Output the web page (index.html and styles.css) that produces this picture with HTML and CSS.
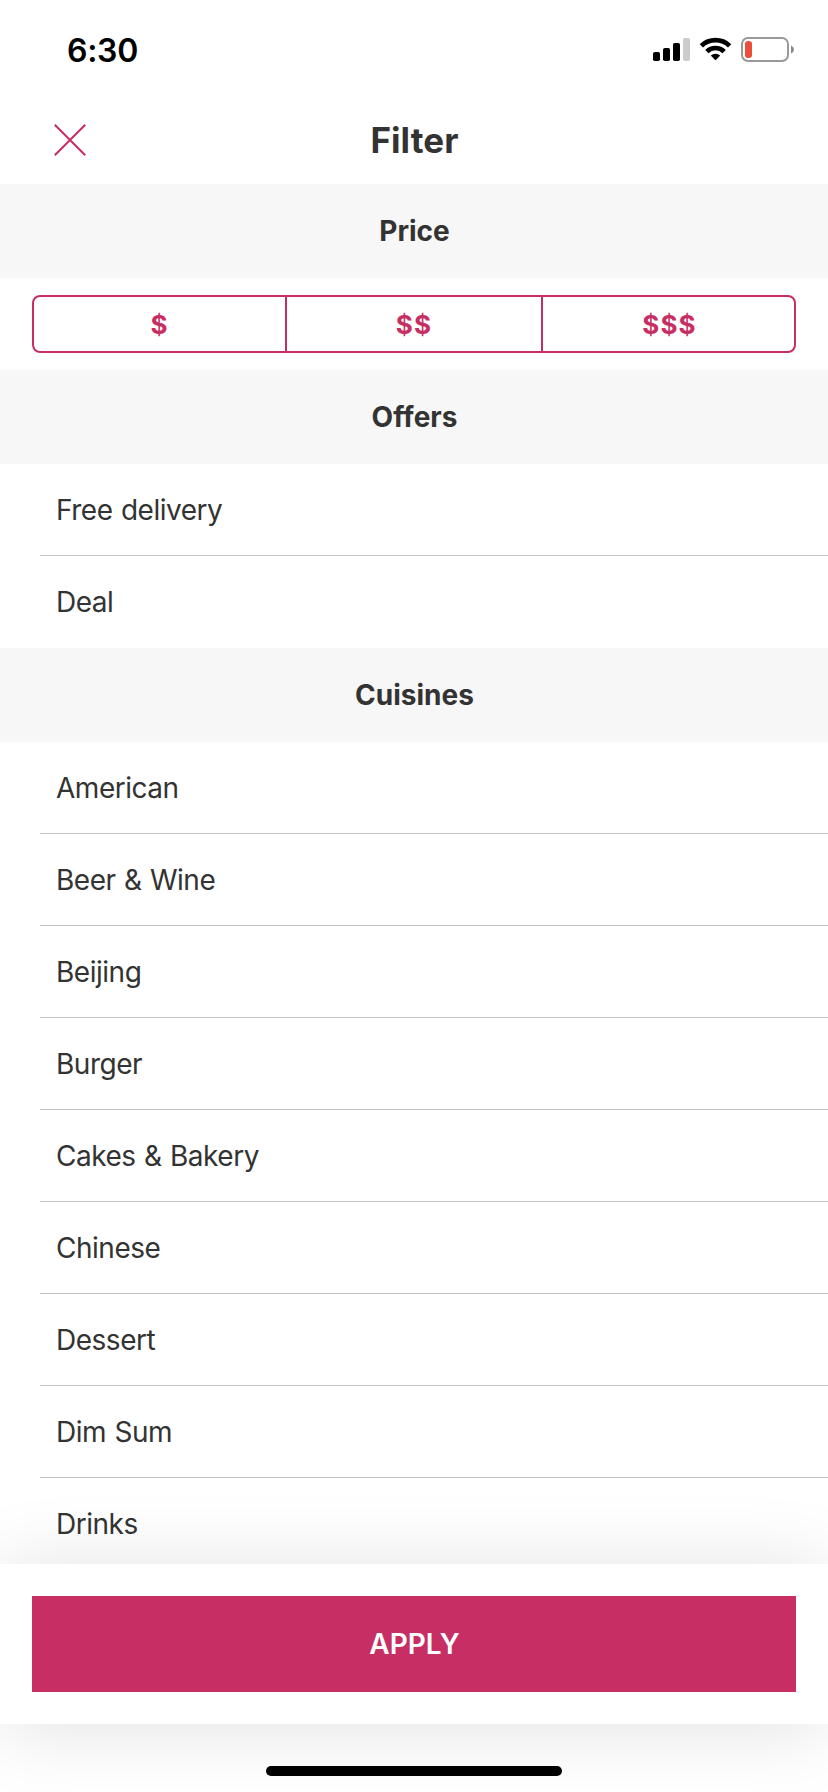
FILE: index.html
```html
<!DOCTYPE html>
<html lang="en">
<head>
<meta charset="utf-8">
<title>Filter</title>
<link rel="stylesheet" href="styles.css">
</head>
<body>
<div class="screen">
  <div class="status-bar">
    <span class="time">6:30</span>
    <svg class="status-icons" width="144" height="28" viewBox="0 0 144 28">
      <rect x="1" y="16" width="7" height="9" rx="1.8"/>
      <rect x="11" y="12" width="7" height="13" rx="1.8"/>
      <rect x="21" y="7" width="7" height="18" rx="1.8"/>
      <rect x="31" y="2" width="7" height="23" rx="1.8" fill="#ccc"/>
      <path d="M47.7 8.2 A22.3 22.3 0 0 1 79.3 8.2 L76 11.6 A17.8 17.8 0 0 0 51 11.6Z"/>
      <path d="M53.2 13.9 A14.7 14.7 0 0 1 73.8 13.9 L70.5 17.2 A10 10 0 0 0 56.5 17.2Z"/>
      <path d="M58.8 19.6 A6.8 6.8 0 0 1 68.2 19.6 L64.1 23.8 Q63.5 24.4 62.9 23.8Z"/>
      <rect x="90" y="2" width="46" height="23" rx="6" fill="none" stroke="#999" stroke-width="2"/>
      <rect x="93" y="5" width="7" height="17" rx="3" fill="#eb4d3d"/>
      <path d="M139 9.5 Q142 10.8 142 13.5 Q142 16.2 139 17.5Z" fill="#888"/>
    </svg>
  </div>
  <header class="nav">
    <svg class="close" width="34" height="34" viewBox="0 0 34 34"><path d="M1.8 1.8 L32.2 32.2 M32.2 1.8 L1.8 32.2"/></svg>
    <h1 class="title">Filter</h1>
  </header>
  <main class="content">
    <h2 class="section">Price</h2>
    <div class="price">
      <div class="segments">
        <span class="segment">$</span>
        <span class="segment middle">$$</span>
        <span class="segment">$$$</span>
      </div>
    </div>
    <h2 class="section">Offers</h2>
    <ul class="list">
      <li class="row">Free delivery</li>
      <li class="row">Deal</li>
    </ul>
    <h2 class="section">Cuisines</h2>
    <ul class="list">
      <li class="row">American</li>
      <li class="row">Beer &amp; Wine</li>
      <li class="row">Beijing</li>
      <li class="row">Burger</li>
      <li class="row">Cakes &amp; Bakery</li>
      <li class="row">Chinese</li>
      <li class="row">Dessert</li>
      <li class="row">Dim Sum</li>
      <li class="row">Drinks</li>
    </ul>
  </main>
  <footer class="footer"><button class="apply">APPLY</button></footer>
  <div class="home"><div class="home-bar"></div></div>
</div>
</body>
</html>
```
FILE: styles.css
```css
* { box-sizing: border-box; }
body { margin: 0; background: #fff; }
.screen {
  display: flex;
  flex-direction: column;
  width: 828px;
  height: 1792px;
  overflow: hidden;
  background: #fff;
  color: #333;
  font-family: Inter, "Liberation Sans", sans-serif;
  font-variant-ligatures: none;
}
.status-bar {
  display: flex;
  justify-content: space-between;
  align-items: center;
  flex: none;
  height: 96px;
  padding: 4px 32px 0 67px;
}
.time { padding-top: 1px; color: #000; font-size: 32px; font-weight: 600; line-height: 40px; letter-spacing: -0.3px; }
.status-icons { flex: none; }
.nav {
  display: grid;
  grid-template-columns: 1fr auto 1fr;
  align-items: center;
  flex: none;
  height: 88px;
  padding: 0 52px 0 53px;
}
.close { fill: none; stroke: #c72e64; stroke-width: 2; }
.title { margin: 0; font-size: 35px; font-weight: 700; line-height: 44px; letter-spacing: 0.1px; }
.content { flex: none; height: 1380px; overflow: hidden; }
.section {
  margin: 0;
  height: 94px;
  padding-left: 1px;
  background: #f7f7f7;
  font-size: 28px;
  font-weight: 700;
  line-height: 95px;
  text-align: center;
  letter-spacing: 0;
}
.price { height: 92px; padding: 17px 32px; }
.segments {
  display: grid;
  grid-template-columns: 251px 258px 251px;
  height: 58px;
  border: 2px solid #c72e64;
  border-radius: 8px;
}
.segment { color: #c72e64; font-size: 26px; font-weight: 700; line-height: 55px; text-align: center; letter-spacing: 1.2px; }
.segment:last-child { padding-left: 2px; }
.middle { border: solid #c72e64; border-width: 0 2px; }
.list { margin: 0; padding: 0 0 0 40px; list-style: none; }
.row { height: 92px; padding-left: 16px; font-size: 28px; line-height: 93px; letter-spacing: -0.48px; word-spacing: 1px; border-bottom: 1px solid #c4c4c6; }
.row:last-child { border-bottom: 0; }
.footer {
  position: relative;
  flex: none;
  height: 160px;
  padding: 32px;
  background: #fff;
  box-shadow: 0 4px 80px rgba(0, 0, 0, 0.12);
}
.apply {
  display: block;
  width: 100%;
  height: 96px;
  padding: 0 0 0 1px;
  border: 0;
  background: #c72e64;
  color: #fff;
  font: 600 28px/96px Inter, "Liberation Sans", sans-serif;
}
.home { position: relative; display: flex; justify-content: center; padding-top: 42px; }
.home-bar { width: 296px; height: 10px; border-radius: 5px; background: #000; }
```
